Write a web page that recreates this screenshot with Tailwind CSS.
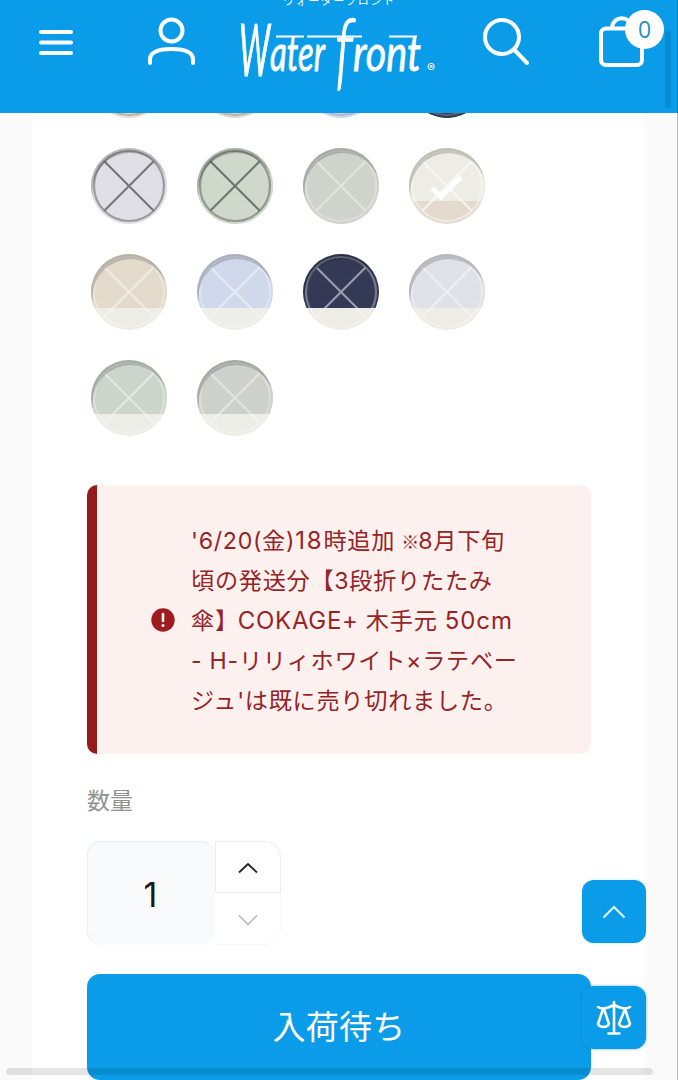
<!DOCTYPE html>
<html lang="ja">

<head>
    <meta charset="UTF-8">
    <meta name="viewport" content="width=device-width, initial-scale=1.0">
    <title>Water front</title>
    <!-- Tailwind CSS -->
    <script src="https://cdn.jsdelivr.net/npm/@tailwindcss/browser@4"></script>
</head>

<body class="bg-[#fafafa] h-[1080px] overflow-hidden relative font-['Inter','Noto_Sans_CJK_JP',sans-serif]">
    <!-- Header -->
    <header class="h-[113px] bg-[#0a9ce8] relative z-10 overflow-hidden">
        <div class="flex items-start">
            <button class="ml-[38px] mt-[28px] w-[36px] h-[29px]" aria-label="メニュー">
                <svg class="block" width="36" height="29" fill="none" stroke="#fff" stroke-width="4" stroke-linecap="round">
                    <path d="M3 4H33M3 14.5H33M3 25H33" />
                </svg>
            </button>
            <button class="ml-[72px] mt-[16px] w-[52px] h-[52px]" aria-label="アカウント">
                <svg class="block" width="52" height="52" fill="none" stroke="#fff" stroke-width="4" stroke-linecap="round">
                    <circle cx="25.5" cy="14.5" r="11" />
                    <path d="M4 47V43.500C4 36 12 33 25.500 33S47 36 47 43.500V47" />
                </svg>
            </button>
            <!-- Logo -->
            <svg class="block ml-[27px] w-[225px] h-[113px] overflow-visible" viewBox="225 0 225 113" fill="#fff">
                <text x="283" y="4.500" font-size="11" textLength="111" font-family="Noto Sans CJK JP">ウォーターフロント</text>
                <g font-family="Lato" font-style="italic" font-weight="400" stroke="#fff" stroke-width=".8">
                    <text x="239" y="76" font-size="72" textLength="31" lengthAdjust="spacingAndGlyphs">W</text>
                    <text x="270" y="71" font-size="51" textLength="55" lengthAdjust="spacingAndGlyphs">ater</text>
                    <text x="335" y="79" font-size="84" font-weight="300" textLength="18" lengthAdjust="spacingAndGlyphs" stroke-width="1.400">f</text>
                    <text x="353" y="71" font-size="51" textLength="68" lengthAdjust="spacingAndGlyphs">ront</text>
                </g>
                <path d="M276 36.500H304M307 36.500H362M389 36.500H417" stroke="#fff" stroke-width="2" />
                <text x="427" y="72" font-size="12" font-family="Inter">®</text>
            </svg>
            <button class="ml-[32px] mt-[16px] w-[50px] h-[52px]" aria-label="検索">
                <svg class="block" width="50" height="52" fill="none" stroke="#fff" stroke-width="4" stroke-linecap="round">
                    <circle cx="20" cy="21" r="17" />
                    <path d="M32.500 34L45 47" />
                </svg>
            </button>
            <button class="relative ml-[63px] mt-[10px] w-[68px] h-[62px]" aria-label="カート">
                <svg class="block" width="68" height="62" fill="none" stroke="#fff" stroke-width="4">
                    <rect x="6" y="18.500" width="41" height="36.500" rx="5" />
                    <path d="M17 18C17.500 5 36 5 37 18" />
                </svg>
                <span class="absolute left-[30px] top-0 size-[39px] rounded-full bg-white text-[#2a8fc4] text-[23px] leading-[38px] text-center font-['Open_Sans']">0</span>
            </button>
        </div>
        <div class="absolute right-[7px] top-[31px] w-[6px] h-[77px] rounded-full bg-[#078cd3]"></div>
    </header>

    <!-- Product options -->
    <main class="ml-[32px] w-[613px] h-[967px] bg-white overflow-hidden pl-[55px]">
        <div id="swatches" class="grid grid-cols-[repeat(4,76px)] gap-[30px] ml-1 -mt-[71px]"></div>

        <div class="mt-[49px] w-[504px] h-[269px] bg-[#fdf1f0] border-l-[10px] border-[#961b1b] rounded-[10px] flex items-center">
            <svg class="shrink-0 ml-[54px] mt-px" width="24" height="24">
                <circle cx="12" cy="12" r="11.700" fill="#a01b1d" />
                <path d="M12 6V13" stroke="#fff" stroke-width="2.600" stroke-linecap="round" />
                <circle cx="12" cy="17.500" r="1.500" fill="#fff" />
            </svg>
            <p class="ml-4 mt-[2px] text-[23.2px] leading-[40px] tracking-[0.7px] text-[#962426] whitespace-nowrap">
                '6/20(金)<span class="text-[24px] tracking-[1.8px]">18</span>時追加 <span class="inline-block w-[17px] -ml-px text-[18px] font-medium leading-none tracking-normal font-['Noto_Sans_CJK_JP']">※</span>8月下旬<br>
                頃の発送分【3段折りたたみ<br>
                傘】<span class="text-[24px] tracking-[0.7px] -ml-px">COKAGE+</span> 木手元 <span class="text-[24px] tracking-[0.9px]">50cm</span><br>
                - H-リリィホワイト×ラテベー<br>
                ジュ'は既に売り切れました。
            </p>
        </div>

        <div class="mt-[30px] text-[23px] leading-[34px] text-[#929292]">数量</div>
        <div class="mt-[23px] w-[194px] h-[104px] flex">
            <div class="w-[128px] h-full pr-[2px] pt-[2px] bg-[#f9fafb] border-t border-l border-[#e3eef8] rounded-[14px] flex items-center justify-center text-[34px] text-[#181818]">1</div>
            <div class="flex-1 flex flex-col">
                <button class="h-[52px] pt-[2px] border border-[#ececf0] rounded-tr-[16px] flex items-center justify-center">
                    <svg width="20" height="12" fill="none" stroke="#222" stroke-width="1.800"><path d="M1 10.500L10 2L19 10.500" /></svg>
                </button>
                <button class="flex-1 border-r border-b border-[#f8f8f8] rounded-br-[16px] flex items-center justify-center">
                    <svg class="mt-[3px]" width="20" height="12" fill="none" stroke="#b5b5b5" stroke-width="1.500"><path d="M1 1.500L10 10.500L19 1.500" /></svg>
                </button>
            </div>
        </div>

        <button class="block mt-[29px] w-[504px] h-[106px] pt-[2px] rounded-[13px] bg-[#0a9ce8] text-white text-[33px] tracking-[0.2px]">入荷待ち</button>
    </main>

    <!-- Floating buttons -->
    <div class="absolute left-[582px] top-[880px] flex flex-col gap-[43px]">
        <button class="w-[64px] h-[63px] rounded-[12px] bg-[#0a9ce8] flex items-center justify-center shadow-[0_0_2px_#0a86c855]" aria-label="トップへ">
            <svg width="24" height="14" fill="none" stroke="#e9fbff" stroke-width="2"><path d="M1.500 12.500L12 2L22.500 12.500" /></svg>
        </button>
        <button class="w-[64px] h-[63px] rounded-[12px] bg-[#0a9ce8] flex items-center justify-center shadow-[0_0_3px_#0779b899]" aria-label="比較">
            <svg width="36" height="36" fill="none" stroke="#fff" stroke-width="2.600" stroke-linejoin="round" stroke-linecap="round">
                <path d="M18 2V33M12.500 33.500H23.500M2 7C7 10 11 8 18 5C25 8 29 10 34 7" />
                <path d="M7 9L2 24C4 28 11 28 13 24L8 9M29 9L23 24C25 28 32 28 34 24L29 9" />
            </svg>
        </button>
    </div>

    <div class="absolute left-[6px] top-[1068px] w-[647px] h-[7px] rounded-full bg-black/10"></div>
    <div class="absolute z-20 right-0 top-0 w-px h-full bg-black/25"></div>

    <script>
        // top colour, bottom colour, height of the top part, line colour
        const swatches = [
            ['#e4dccf', '#e4dccf', 76, '#a39c94'],
            ['#ddd8cc', '#ddd8cc', 76, '#a39c94'],
            ['#ced8ec', '#ced8ec', 76, '#a0a8bb'],
            ['#343a55', '#343a55', 76, '#777777'],
            ['#e1dfe6', '#e1dfe6', 76, '#77767c'],
            ['#cfd8cb', '#cfd8cb', 76, '#70776d'],
            ['#cfd3cc', '#cfd3cc', 76, '#e1e4df'],
            ['#edede5', '#e3dacd', 53, '#f8f7f3', true],
            ['#e3dacc', '#edede6', 54, '#f0eae1'],
            ['#d0d8eb', '#edeee8', 54, '#e5eaf5'],
            ['#343a55', '#edece5', 54, '#979bab'],
            ['#e0e0e8', '#edede6', 54, '#eeeef3'],
            ['#ccd5cc', '#edede7', 54, '#e2e8df'],
            ['#cdd1cc', '#edede7', 54, '#e1e4de']
        ];

        const lines = '<circle cx="38" cy="38" r="35" stroke-opacity=".65" /><path d="M13.300 13.300L62.700 62.700M62.700 13.300L13.300 62.700" />';

        document.getElementById('swatches').innerHTML = swatches.map(([top, bottom, split, line, checked]) => `
            <div class="size-[76px] rounded-full overflow-hidden">
                <svg class="block" width="76" height="76" fill="none" stroke-width="2.200">
                    <rect width="76" height="76" fill="${bottom}" />
                    <g stroke="#f3f2ee">${lines}</g>
                    <!-- nested svg clips the lines to the top part -->
                    <svg width="76" height="${split}">
                        <rect width="76" height="76" fill="${top}" />
                        <g stroke="${line}">${lines}</g>
                        <path fill-rule="evenodd" d="M0 0H76V76H0ZM1.500 43A38 38 0 0 0 77.500 43A38 38 0 0 0 1.500 43Z" fill="#000" fill-opacity=".19" />
                    </svg>
                    ${checked ? '<path d="M23 40L32 49L52 29" stroke="#fff" stroke-width="5" />' : ''}
                </svg>
            </div>`).join('');
    </script>
</body>

</html>
